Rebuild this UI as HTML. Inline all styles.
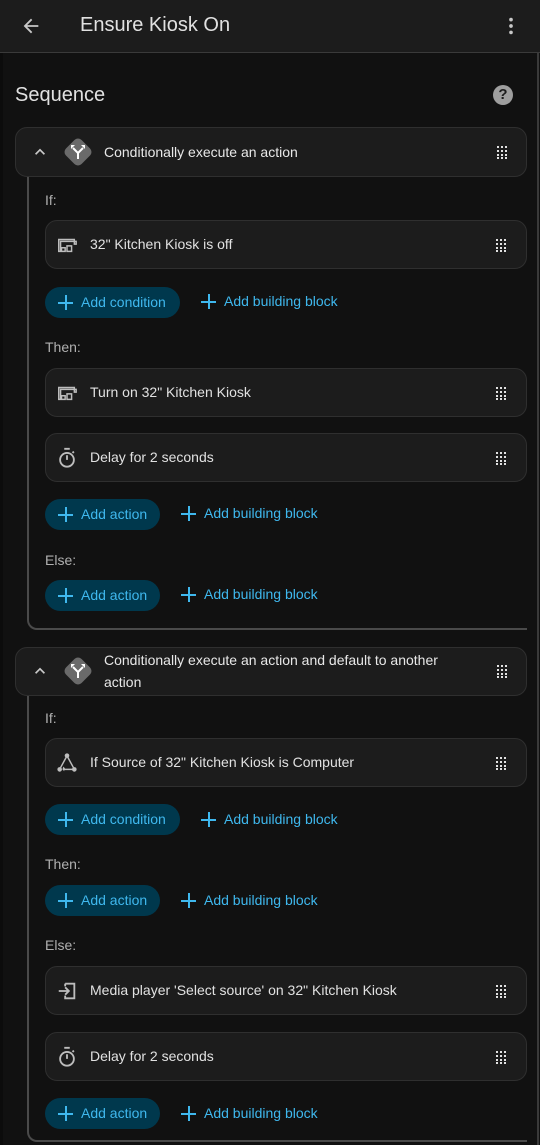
<!DOCTYPE html>
<html style="width:540px;height:1145px;overflow:hidden"><head><meta charset="utf-8"><style>
*{margin:0;padding:0;box-sizing:border-box}
body{width:540px;height:1145px;background:#111111;font-family:"Liberation Sans",sans-serif;color:#e1e1e1;position:relative;overflow:hidden}
.a{position:absolute}
.hdr{left:0;top:0;width:540px;height:53px;background:#1c1c1c;border-bottom:1px solid #3a3a3a}
.card{position:absolute;left:45px;width:482px;height:49px;background:#1c1c1c;border:1px solid #2f2f2f;border-radius:12px}
.card .t{position:absolute;left:44px;top:0;line-height:47px;font-size:14px;color:#e1e1e1}
.card svg.i{position:absolute;left:10px;top:13px}
.dots{position:absolute;right:17px;top:50%;margin-top:-7px}
.hcard{position:absolute;left:15px;width:512px;background:#1c1c1c;border:1px solid #2f2f2f;border-radius:12px}
.lbl{position:absolute;left:45px;font-size:14px;color:#b0b0b0}
.pill{position:absolute;left:45px;height:31px;border-radius:16px;background:#00384d;color:#3fb8ee;font-size:14px;line-height:31px;padding-left:36px}
.pill::before,.bb::before{content:"";position:absolute;left:13px;top:8px;width:15px;height:15px;background:linear-gradient(#3fb8ee,#3fb8ee) center/15px 2px no-repeat,linear-gradient(#3fb8ee,#3fb8ee) center/2px 15px no-repeat}
.bb{position:absolute;height:31px;color:#3fb8ee;font-size:14px;line-height:31px;padding-left:36px}
.body{position:absolute;left:27px;width:500px;border-left:2px solid #4a4a4a;border-bottom:2px solid #4a4a4a;border-bottom-left-radius:10px}
</style></head><body>
<div class="a" style="left:0;top:0;width:3px;height:1145px;background:#0c0c0c"></div>
<div class="a" style="left:537px;top:53px;width:2px;height:1092px;background:#3a3a3a"></div>
<div class="a hdr"></div>
<svg class="a" style="left:20px;top:15px" width="22" height="22" viewBox="0 0 24 24"><path d="M20 11H7.8l5.6-5.6L12 4l-8 8 8 8 1.4-1.4L7.8 13H20z" fill="#c8c8c8"/></svg>
<div class="a" style="left:80px;top:14px;font-size:20px;color:#e1e1e1">Ensure Kiosk On</div>
<svg class="a" style="left:500px;top:15px" width="22" height="22" viewBox="0 0 24 24"><circle cx="12" cy="5" r="2" fill="#c8c8c8"/><circle cx="12" cy="12" r="2" fill="#c8c8c8"/><circle cx="12" cy="19" r="2" fill="#c8c8c8"/></svg>
<div class="a" style="left:15px;top:84px;font-size:20px;color:#e1e1e1">Sequence</div>
<div class="a" style="left:493px;top:85px;width:20px;height:20px;border-radius:50%;background:#9e9e9e;color:#1c1c1c;font-weight:bold;font-size:15px;text-align:center;line-height:20px">?</div>

<!-- block 1 -->
<div class="body" style="top:170px;height:460px"></div>
<div class="hcard" style="top:127px;height:50px"></div>
<svg class="a" style="left:30px;top:142px" width="20" height="20" viewBox="0 0 24 24"><path d="M7.4 15.4 12 10.8l4.6 4.6L18 14l-6-6-6 6z" fill="#c8c8c8"/></svg>
<svg class="a" style="left:60px;top:134px" width="36" height="36" viewBox="0 0 36 36"><rect x="7" y="7" width="22" height="22" rx="5" transform="rotate(45 18 18)" fill="#6a6a6a"/><path d="M18 25v-6l-5-5M18 19l5-5" stroke="#fff" stroke-width="2" fill="none"/><path d="M11 11l4 0-4 4z M25 11l-4 0 4 4z" fill="#fff"/></svg>
<div class="a" style="left:104px;top:144px;font-size:14px;color:#e8e8e8">Conditionally execute an action</div>
<svg class="a" style="left:496px;top:145px" width="14" height="14" viewBox="0 0 14 14" fill="#e1e1e1"><path d="M1 1h2v2H1zM5 1h2v2H5zM9 1h2v2H9zM1 5h2v2H1zM5 5h2v2H5zM9 5h2v2H9zM1 9h2v2H1zM5 9h2v2H5zM9 9h2v2H9zM1 12h2v2H1zM5 12h2v2H5zM9 12h2v2H9z"/></svg>

<div class="lbl" style="top:192px">If:</div>
<div class="card" style="top:220px"><svg class="i" width="22" height="22" viewBox="0 0 24 24"><path d="M3 6h17v2H5v11H3zM12 13h5v6h-5zM6 15h4v4H6zM20 8h2v3h-2z" fill="none" stroke="#bdbdbd" stroke-width="1.6"/></svg><div class="t">32" Kitchen Kiosk is off</div><svg class="dots" width="14" height="14" viewBox="0 0 14 14" fill="#e1e1e1"><path d="M1 1h2v2H1zM5 1h2v2H5zM9 1h2v2H9zM1 5h2v2H1zM5 5h2v2H5zM9 5h2v2H9zM1 9h2v2H1zM5 9h2v2H5zM9 9h2v2H9zM1 12h2v2H1zM5 12h2v2H5zM9 12h2v2H9z"/></svg></div>
<div class="pill" style="top:287px;width:135px">Add condition</div>
<div class="bb" style="left:188px;top:286px">Add building block</div>

<div class="lbl" style="top:339px">Then:</div>
<div class="card" style="top:368px"><svg class="i" width="22" height="22" viewBox="0 0 24 24"><path d="M3 6h17v2H5v11H3zM12 13h5v6h-5zM6 15h4v4H6zM20 8h2v3h-2z" fill="none" stroke="#bdbdbd" stroke-width="1.6"/></svg><div class="t">Turn on 32" Kitchen Kiosk</div><svg class="dots" width="14" height="14" viewBox="0 0 14 14" fill="#e1e1e1"><path d="M1 1h2v2H1zM5 1h2v2H5zM9 1h2v2H9zM1 5h2v2H1zM5 5h2v2H5zM9 5h2v2H9zM1 9h2v2H1zM5 9h2v2H5zM9 9h2v2H9zM1 12h2v2H1zM5 12h2v2H5zM9 12h2v2H9z"/></svg></div>
<div class="card" style="top:433px"><svg class="i" width="22" height="22" viewBox="0 0 24 24"><circle cx="12" cy="14" r="7.5" fill="none" stroke="#bdbdbd" stroke-width="2"/><path d="M9 2h6M12 14V9M18 6.5l1.5-1.5" stroke="#bdbdbd" stroke-width="2"/></svg><div class="t">Delay for 2 seconds</div><svg class="dots" width="14" height="14" viewBox="0 0 14 14" fill="#e1e1e1"><path d="M1 1h2v2H1zM5 1h2v2H5zM9 1h2v2H9zM1 5h2v2H1zM5 5h2v2H5zM9 5h2v2H9zM1 9h2v2H1zM5 9h2v2H5zM9 9h2v2H9zM1 12h2v2H1zM5 12h2v2H5zM9 12h2v2H9z"/></svg></div>
<div class="pill" style="top:499px;width:115px">Add action</div>
<div class="bb" style="left:168px;top:498px">Add building block</div>

<div class="lbl" style="top:552px">Else:</div>
<div class="pill" style="top:580px;width:115px">Add action</div>
<div class="bb" style="left:168px;top:579px">Add building block</div>

<!-- block 2 -->
<div class="body" style="top:688px;height:454px"></div>
<div class="hcard" style="top:647px;height:49px"></div>
<svg class="a" style="left:30px;top:661px" width="20" height="20" viewBox="0 0 24 24"><path d="M7.4 15.4 12 10.8l4.6 4.6L18 14l-6-6-6 6z" fill="#c8c8c8"/></svg>
<svg class="a" style="left:60px;top:653px" width="36" height="36" viewBox="0 0 36 36"><rect x="7" y="7" width="22" height="22" rx="5" transform="rotate(45 18 18)" fill="#6a6a6a"/><path d="M18 25v-6l-5-5M18 19l5-5" stroke="#fff" stroke-width="2" fill="none"/><path d="M11 11l4 0-4 4z M25 11l-4 0 4 4z" fill="#fff"/></svg>
<div class="a" style="left:104px;top:649px;font-size:14px;line-height:22px;color:#e8e8e8;width:360px">Conditionally execute an action and default to another action</div>
<svg class="a" style="left:496px;top:664px" width="14" height="14" viewBox="0 0 14 14" fill="#e1e1e1"><path d="M1 1h2v2H1zM5 1h2v2H5zM9 1h2v2H9zM1 5h2v2H1zM5 5h2v2H5zM9 5h2v2H9zM1 9h2v2H1zM5 9h2v2H5zM9 9h2v2H9zM1 12h2v2H1zM5 12h2v2H5zM9 12h2v2H9z"/></svg>

<div class="lbl" style="top:710px">If:</div>
<div class="card" style="top:738px"><svg class="i" width="22" height="22" viewBox="0 0 24 24"><circle cx="12" cy="4" r="2.5" fill="#bdbdbd"/><circle cx="4" cy="19" r="2.5" fill="#bdbdbd"/><circle cx="20" cy="19" r="2.5" fill="#bdbdbd"/><path d="M11 6l-6 11M13 6l6 11M8 19h10" stroke="#bdbdbd" stroke-width="1.6" fill="none"/><path d="M8 16l-1 3 3-1zM9 17l-2 2 2 2z" fill="#bdbdbd"/></svg><div class="t">If Source of 32" Kitchen Kiosk is Computer</div><svg class="dots" width="14" height="14" viewBox="0 0 14 14" fill="#e1e1e1"><path d="M1 1h2v2H1zM5 1h2v2H5zM9 1h2v2H9zM1 5h2v2H1zM5 5h2v2H5zM9 5h2v2H9zM1 9h2v2H1zM5 9h2v2H5zM9 9h2v2H9zM1 12h2v2H1zM5 12h2v2H5zM9 12h2v2H9z"/></svg></div>
<div class="pill" style="top:804px;width:135px">Add condition</div>
<div class="bb" style="left:188px;top:804px">Add building block</div>

<div class="lbl" style="top:856px">Then:</div>
<div class="pill" style="top:885px;width:115px">Add action</div>
<div class="bb" style="left:168px;top:885px">Add building block</div>

<div class="lbl" style="top:937px">Else:</div>
<div class="card" style="top:966px"><svg class="i" width="22" height="22" viewBox="0 0 24 24"><path d="M10 4h10v16H10v-3M10 7V4" fill="none" stroke="#bdbdbd" stroke-width="2"/><path d="M3 12h10M10 8l4 4-4 4" fill="none" stroke="#bdbdbd" stroke-width="2"/></svg><div class="t">Media player 'Select source' on 32" Kitchen Kiosk</div><svg class="dots" width="14" height="14" viewBox="0 0 14 14" fill="#e1e1e1"><path d="M1 1h2v2H1zM5 1h2v2H5zM9 1h2v2H9zM1 5h2v2H1zM5 5h2v2H5zM9 5h2v2H9zM1 9h2v2H1zM5 9h2v2H5zM9 9h2v2H9zM1 12h2v2H1zM5 12h2v2H5zM9 12h2v2H9z"/></svg></div>
<div class="card" style="top:1032px"><svg class="i" width="22" height="22" viewBox="0 0 24 24"><circle cx="12" cy="14" r="7.5" fill="none" stroke="#bdbdbd" stroke-width="2"/><path d="M9 2h6M12 14V9M18 6.5l1.5-1.5" stroke="#bdbdbd" stroke-width="2"/></svg><div class="t">Delay for 2 seconds</div><svg class="dots" width="14" height="14" viewBox="0 0 14 14" fill="#e1e1e1"><path d="M1 1h2v2H1zM5 1h2v2H5zM9 1h2v2H9zM1 5h2v2H1zM5 5h2v2H5zM9 5h2v2H9zM1 9h2v2H1zM5 9h2v2H5zM9 9h2v2H9zM1 12h2v2H1zM5 12h2v2H5zM9 12h2v2H9z"/></svg></div>
<div class="pill" style="top:1098px;width:115px">Add action</div>
<div class="bb" style="left:168px;top:1098px">Add building block</div>
</body></html>
